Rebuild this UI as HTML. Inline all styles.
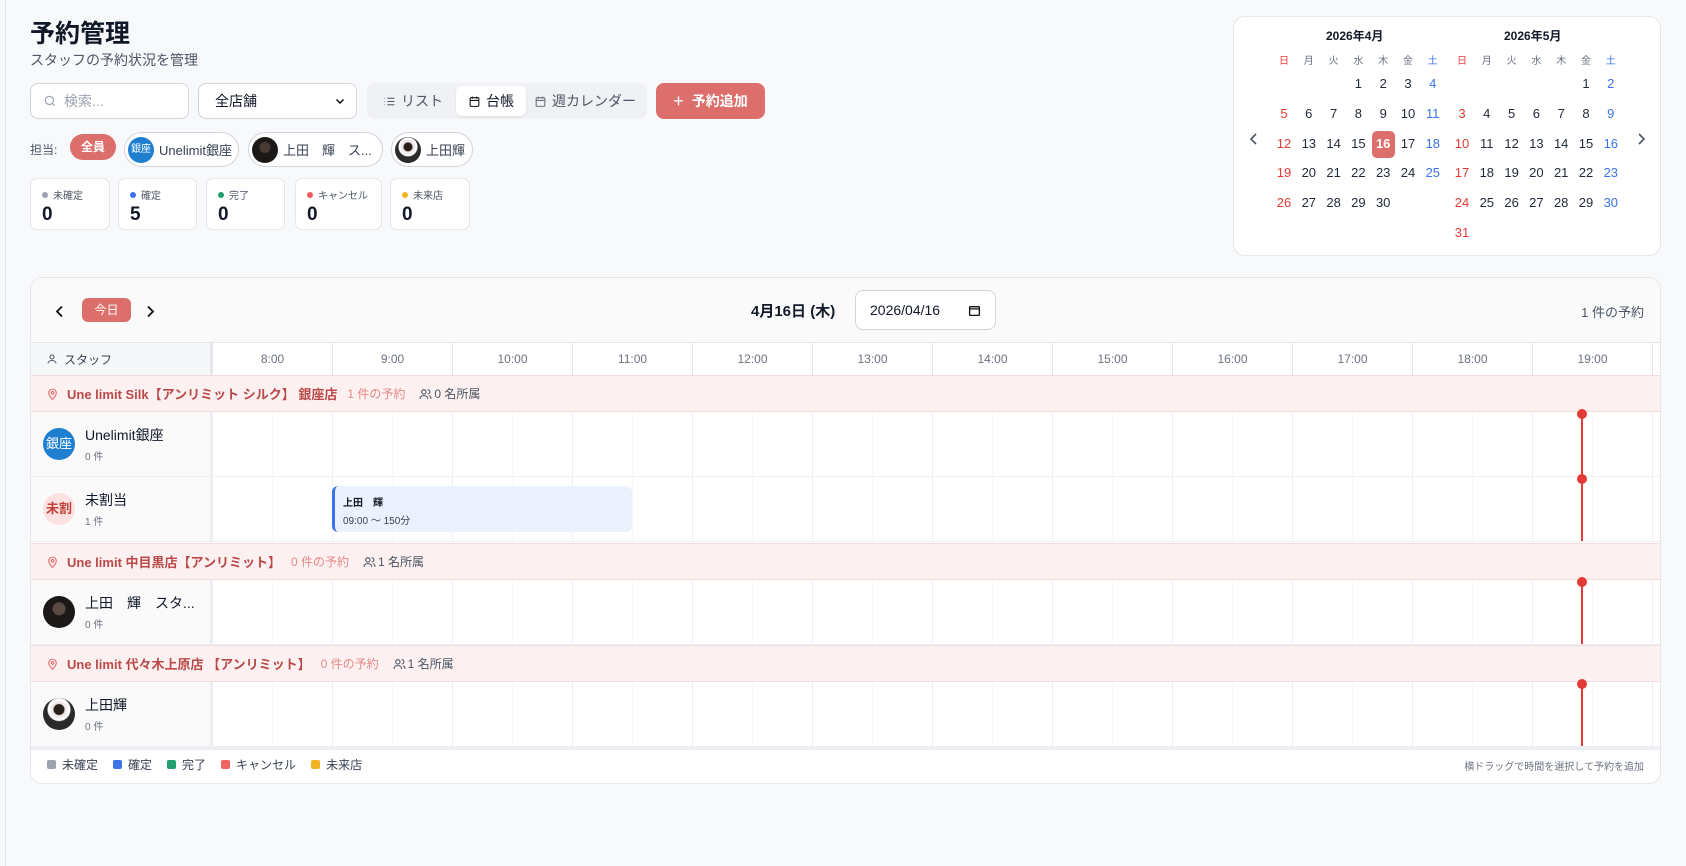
<!DOCTYPE html>
<html><head><meta charset="utf-8"><style>
*{box-sizing:border-box;margin:0;padding:0}
body{width:1686px;height:866px;background:#f8f9fb;font-family:"Liberation Sans","Noto Sans CJK JP",sans-serif;color:#111827;position:relative;overflow:hidden}
.a{position:absolute}
.side{left:5px;top:0;width:1px;height:866px;background:#e5e7eb}
h1{position:absolute;left:30px;top:14px;font-size:25px;font-weight:700;color:#111827}
.sub{left:30px;top:50px;font-size:14px;color:#4b5563}
.box{background:#fff;border:1px solid #d1d5db;border-radius:8px}
.ctl{top:83px;height:36px;display:flex;align-items:center;font-size:14px}
.chip{top:132px;height:35px;border:1px solid #d1d5db;border-radius:18px;background:#fff;display:flex;align-items:center;font-size:13px;color:#374151;padding-left:3px;gap:5px}
.av{width:26px;height:26px;border-radius:50%;flex:none}
.stat{top:178px;height:52px;background:#fff;border:1px solid #e5e7eb;border-radius:7px;padding:8px 11px}
.stat .l{font-size:10px;color:#4b5563;display:flex;align-items:center;gap:5px}
.stat .l i{width:6px;height:6px;border-radius:50%;display:inline-block}
.stat .v{font-size:19px;font-weight:700;margin-top:2px}
.cal{left:1233px;top:16px;width:428px;height:240px;background:#fff;border:1px solid #e5e7eb;border-radius:12px}
.cd{position:absolute;width:24px;text-align:center;font-size:13px;color:#1f2937;transform:translateX(-12px)}
.card{left:30px;top:277px;width:1631px;height:507px;background:#fff;border:1px solid #e5e7eb;border-radius:12px;overflow:hidden}
.hr{position:absolute;top:65px;height:33px;width:120px;border-left:1px solid #e5e7eb;font-size:12px;color:#6b7280;text-align:center;line-height:32px}
.grp{position:absolute;left:0;width:1631px;height:37px;background:#fdf0f0;border-top:1px solid #f5dcdc;border-bottom:1px solid #f5dcdc;font-size:13px;display:flex;align-items:center;padding-left:15px}
.grp b{color:#b94a48;font-weight:700;margin-left:8px}
.grp .c{color:#e58a87;margin-left:10px;font-size:12px}
.grp .m{color:#4b5563;margin-left:14px;font-size:12px;display:flex;align-items:center;gap:2px}
.row{position:absolute;left:0;width:1631px;height:65px;border-bottom:1px solid #eef0f3}
.sc{position:absolute;left:0;top:0;width:181px;height:100%;background:#fafafb;border-right:2px solid #eceef1;display:flex;align-items:center;padding-left:12px;gap:10px}
.sc .n{font-size:14px;color:#111827}
.sc .k{font-size:10px;color:#6b7280;margin-top:3px}
.grid{position:absolute;left:181px;top:0;right:0;height:100%;background-image:repeating-linear-gradient(90deg,#eceef1 0 1px,transparent 1px 60px,#f7f8fa 60px 61px,transparent 61px 120px)}
.now{position:absolute;left:1550px;top:0;width:2px;height:100%;background:#e53935}
.now:before{content:"";position:absolute;left:-4px;top:-3px;width:10px;height:10px;border-radius:50%;background:#e53935}
.lg{font-size:12px;color:#374151;display:flex;align-items:center;gap:6px}
.lg i{width:9px;height:9px;border-radius:2px;display:inline-block}
</style></head><body>
<div class="a side"></div>
<h1>予約管理</h1>
<div class="a sub">スタッフの予約状況を管理</div>

<div class="a box ctl" style="left:30px;width:159px;padding-left:12px;color:#9ca3af">
<svg width="14" height="14" viewBox="0 0 24 24" fill="none" stroke="#9ca3af" stroke-width="2"><circle cx="11" cy="11" r="7"/><path d="M20 20l-4-4"/></svg><span style="margin-left:7px">検索...</span></div>
<div class="a box ctl" style="left:198px;width:159px;padding:0 10px 0 16px;justify-content:space-between;color:#111827"><span>全店舗</span><svg width="12" height="12" viewBox="0 0 24 24" fill="none" stroke="#111" stroke-width="3"><path d="M5 9l7 7 7-7"/></svg></div>
<div class="a ctl" style="left:367px;width:280px;background:#f0f1f4;border-radius:8px;padding:3px;color:#4b5563">
<div style="width:86px;display:flex;align-items:center;justify-content:center;gap:5px"><svg width="13" height="13" viewBox="0 0 24 24" fill="none" stroke="#4b5563" stroke-width="2"><path d="M8 6h13M8 12h13M8 18h13M3 6h1M3 12h1M3 18h1"/></svg>リスト</div>
<div style="width:70px;height:30px;background:#fff;border-radius:6px;display:flex;align-items:center;justify-content:center;gap:5px;color:#111827;box-shadow:0 1px 2px rgba(0,0,0,.08)"><svg width="13" height="13" viewBox="0 0 24 24" fill="none" stroke="#111" stroke-width="2"><rect x="4" y="5" width="16" height="16" rx="2"/><path d="M4 10h16M8 3v4M16 3v4"/></svg>台帳</div>
<div style="flex:1;display:flex;align-items:center;justify-content:center;gap:5px"><svg width="13" height="13" viewBox="0 0 24 24" fill="none" stroke="#6b7280" stroke-width="2"><rect x="4" y="5" width="16" height="16" rx="2"/><path d="M4 10h16M8 3v4M16 3v4"/></svg>週カレンダー</div></div>
<div class="a ctl" style="left:656px;width:109px;background:#dc6f6b;border-radius:8px;color:#fff;font-weight:700;justify-content:center;gap:8px"><span style="font-size:18px;font-weight:400">+</span>予約追加</div>

<div class="a" style="left:30px;top:141px;font-size:12px;color:#4b5563">担当:</div>
<div class="a" style="left:70px;top:134px;width:46px;height:26px;background:#dc6f6b;border-radius:13px;color:#fff;font-size:12px;font-weight:700;text-align:center;line-height:26px">全員</div>
<div class="a chip" style="left:124px;width:115px"><div class="av" style="background:#1e7fd0;color:#fff;font-size:10px;text-align:center;line-height:26px">銀座</div>Unelimit銀座</div>
<div class="a chip" style="left:248px;width:135px"><div class="av" style="background:radial-gradient(circle at 50% 40%,#4a3a34 0 5px,#1c1818 6px)"></div>上田　輝　ス...</div>
<div class="a chip" style="left:391px;width:82px"><div class="av" style="background:radial-gradient(circle at 50% 38%,#2a201a 0 4px,#f0e8ea 5px 7px,#fff 8px 9px,#2a2a2a 10px)"></div>上田輝</div>

<div class="a stat" style="left:30px;width:80px"><div class="l"><i style="background:#9ca3af"></i>未確定</div><div class="v">0</div></div>
<div class="a stat" style="left:118px;width:79px"><div class="l"><i style="background:#3b73e8"></i>確定</div><div class="v">5</div></div>
<div class="a stat" style="left:206px;width:79px"><div class="l"><i style="background:#22a06b"></i>完了</div><div class="v">0</div></div>
<div class="a stat" style="left:295px;width:87px"><div class="l"><i style="background:#ef5b5b"></i>キャンセル</div><div class="v">0</div></div>
<div class="a stat" style="left:390px;width:80px"><div class="l"><i style="background:#f0b323"></i>未来店</div><div class="v">0</div></div>

<div class="a cal">
<div class="a" style="left:92px;top:10px;font-size:12px;font-weight:700">2026年4月</div>
<div class="a" style="left:270px;top:10px;font-size:12px;font-weight:700">2026年5月</div>
<svg class="a" style="left:15px;top:116px" width="10" height="12" viewBox="0 0 10 12" fill="none" stroke="#4b5563" stroke-width="1.6"><path d="M7 1L2 6l5 5"/></svg>
<svg class="a" style="left:402px;top:116px" width="10" height="12" viewBox="0 0 10 12" fill="none" stroke="#4b5563" stroke-width="1.6"><path d="M3 1l5 5-5 5"/></svg>
<div class="a" style="left:138px;top:114px;width:23px;height:27px;background:#dc6f6b;border-radius:5px"></div>
<div id="cal"></div>
</div>

<div class="a card">
<div class="a" style="left:0;top:0;width:1631px;height:65px;background:#fafafb;border-bottom:1px solid #e5e7eb"></div>
<svg class="a" style="left:24px;top:27px" width="10" height="13" viewBox="0 0 10 13" fill="none" stroke="#111" stroke-width="1.8"><path d="M7 1.5L2 6.5l5 5"/></svg>
<div class="a" style="left:51px;top:0;width:49px;height:24px;margin-top:20px;background:#dc6f6b;border-radius:6px;color:#fff;font-size:12px;text-align:center;line-height:24px">今日</div>
<svg class="a" style="left:114px;top:27px" width="10" height="13" viewBox="0 0 10 13" fill="none" stroke="#111" stroke-width="1.8"><path d="M3 1.5l5 5-5 5"/></svg>
<div class="a" style="left:720px;top:22px;font-size:15px;font-weight:700">4月16日 (木)</div>
<div class="a box" style="left:824px;top:12px;width:141px;height:40px;font-size:14px;padding:11px 0 0 14px;border-color:#d1d5db">2026/04/16<svg style="position:absolute;right:14px;top:13px" width="13" height="13" viewBox="0 0 24 24" fill="none" stroke="#111" stroke-width="2.5"><rect x="3" y="5" width="18" height="16" rx="1"/><path d="M3 9h18"/></svg></div>
<div class="a" style="right:16px;top:24px;font-size:13px;color:#4b5563">1 件の予約</div>

<div class="a" style="left:0;top:65px;width:181px;height:33px;background:#f6f7f9;border-right:2px solid #e5e7eb;border-bottom:1px solid #e5e7eb;font-size:12px;color:#374151;display:flex;align-items:center;padding-left:15px;gap:6px"><svg width="12" height="12" viewBox="0 0 24 24" fill="none" stroke="#4b5563" stroke-width="2"><circle cx="12" cy="8" r="4"/><path d="M4 21c0-4 4-6 8-6s8 2 8 6"/></svg>スタッフ</div>
<div class="a" style="left:181px;top:97px;width:1450px;height:1px;background:#e5e7eb"></div>
<div id="hrs"></div>

<div class="grp" style="top:97px"><svg width="13" height="14" viewBox="0 0 24 24" fill="none" stroke="#e0706c" stroke-width="2"><path d="M12 22s7-7 7-12a7 7 0 10-14 0c0 5 7 12 7 12z"/><circle cx="12" cy="10" r="2.5"/></svg><b>Une limit Silk【アンリミット シルク】 銀座店</b><span class="c">1 件の予約</span><span class="m"><svg width="13" height="12" viewBox="0 0 24 22" fill="none" stroke="#4b5563" stroke-width="2"><circle cx="9" cy="7" r="4"/><path d="M2 20c0-4 3-6 7-6s7 2 7 6M16 3a4 4 0 010 8M19 14c2 1 3 3 3 6"/></svg>0 名所属</span></div>
<div class="row" style="top:134px"><div class="grid"></div><div class="now"></div><div class="sc"><div class="av" style="width:32px;height:32px;background:#1e7fd0;color:#fff;font-size:13px;text-align:center;line-height:32px">銀座</div><div><div class="n">Unelimit銀座</div><div class="k">0 件</div></div></div></div>
<div class="row" style="top:199px"><div class="grid"></div><div class="now"></div><div class="sc"><div class="av" style="width:32px;height:32px;background:#fbe1e0;color:#c0403c;font-size:13px;font-weight:700;text-align:center;line-height:32px">未割</div><div><div class="n">未割当</div><div class="k">1 件</div></div></div>
<div class="a" style="left:301px;top:9px;width:300px;height:46px;background:#ebf2fe;border-left:3px solid #3b73e8;border-radius:6px;padding:8px 0 0 8px"><div style="font-size:10px;font-weight:700">上田　輝</div><div style="font-size:10px;color:#374151;margin-top:3px">09:00 〜 150分</div></div></div>
<div class="grp" style="top:265px"><svg width="13" height="14" viewBox="0 0 24 24" fill="none" stroke="#e0706c" stroke-width="2"><path d="M12 22s7-7 7-12a7 7 0 10-14 0c0 5 7 12 7 12z"/><circle cx="12" cy="10" r="2.5"/></svg><b>Une limit 中目黒店【アンリミット】</b><span class="c">0 件の予約</span><span class="m"><svg width="13" height="12" viewBox="0 0 24 22" fill="none" stroke="#4b5563" stroke-width="2"><circle cx="9" cy="7" r="4"/><path d="M2 20c0-4 3-6 7-6s7 2 7 6M16 3a4 4 0 010 8M19 14c2 1 3 3 3 6"/></svg>1 名所属</span></div>
<div class="row" style="top:302px"><div class="grid"></div><div class="now"></div><div class="sc"><div class="av" style="width:32px;height:32px;background:radial-gradient(circle at 50% 40%,#5a4a42 0 6px,#1c1818 7px)"></div><div><div class="n">上田　輝　スタ...</div><div class="k">0 件</div></div></div></div>
<div class="grp" style="top:367px"><svg width="13" height="14" viewBox="0 0 24 24" fill="none" stroke="#e0706c" stroke-width="2"><path d="M12 22s7-7 7-12a7 7 0 10-14 0c0 5 7 12 7 12z"/><circle cx="12" cy="10" r="2.5"/></svg><b>Une limit 代々木上原店 【アンリミット】</b><span class="c">0 件の予約</span><span class="m"><svg width="13" height="12" viewBox="0 0 24 22" fill="none" stroke="#4b5563" stroke-width="2"><circle cx="9" cy="7" r="4"/><path d="M2 20c0-4 3-6 7-6s7 2 7 6M16 3a4 4 0 010 8M19 14c2 1 3 3 3 6"/></svg>1 名所属</span></div>
<div class="row" style="top:404px"><div class="grid"></div><div class="now"></div><div class="sc"><div class="av" style="width:32px;height:32px;background:radial-gradient(circle at 50% 36%,#2a201a 0 5px,#f0e8ea 6px 8px,#fff 9px 11px,#2a2a2a 12px)"></div><div><div class="n">上田輝</div><div class="k">0 件</div></div></div></div>
<div class="a" style="left:0;top:469px;width:1631px;height:3px;background:#eceef1"></div>
<div class="a" style="left:16px;display:flex;gap:15px;top:478px">
<div class="lg"><i style="background:#9ca3af"></i>未確定</div><div class="lg"><i style="background:#3b73e8"></i>確定</div><div class="lg"><i style="background:#22a06b"></i>完了</div><div class="lg"><i style="background:#ef6461"></i>キャンセル</div><div class="lg"><i style="background:#f0b323"></i>未来店</div></div>
<div class="a" style="right:16px;top:480px;font-size:10px;color:#6b7280">横ドラッグで時間を選択して予約を追加</div>
</div>
<script>
var h='';for(var i=0;i<13;i++){h+='<div class="hr" style="left:'+(181+i*120)+'px">'+(i<12?(8+i)+':00':'')+'</div>'}
document.getElementById('hrs').innerHTML=h;
var c='',w=['日','月','火','水','木','金','土'];
function col(j){return j==0?'#e53935':j==6?'#3b73e8':'#1f2937'}
function mon(x0,start,days){for(var j=0;j<7;j++)c+='<div class="cd" style="left:'+(x0+j*24.8)+'px;top:35px;font-size:10px;color:'+(j==0?'#e53935':j==6?'#3b73e8':'#6b7280')+'">'+w[j]+'</div>';
for(var d=1;d<=days;d++){var p=start+d-1,r=Math.floor(p/7),j=p%7;var st='left:'+(x0+j*24.8)+'px;top:'+(59+r*29.8)+'px;color:'+col(j);if(x0<200&&d==16)st+=';color:#fff;font-weight:700';c+='<div class="cd" style="'+st+'">'+d+'</div>'}}
mon(50,3,30);mon(228,5,31);
document.getElementById('cal').innerHTML=c;
</script>
</body></html>
